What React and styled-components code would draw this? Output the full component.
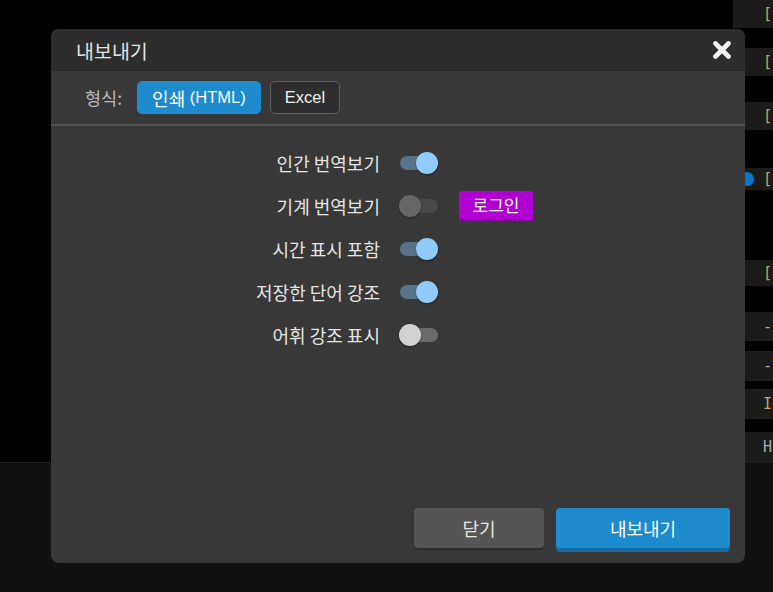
import React from "react";
import styled, { createGlobalStyle } from "styled-components";

const GlobalStyle = createGlobalStyle`
  html, body { margin: 0; padding: 0; background: #000; overflow: hidden; }
  body { font-family: "Liberation Sans", "Noto Sans CJK KR", sans-serif; }
  * { box-sizing: border-box; }
`;

const Page = styled.div`
  position: relative;
  width: 773px;
  height: 592px;
  display: flex;
  flex-direction: column;
  background: #000;
`;

const TopArea = styled.div`
  height: 463px;
  display: flex;
  justify-content: flex-end;
  border-bottom: 1px solid #1c1c1c;
`;

const SidePanel = styled.div`
  width: 40px;
  border-left: 1px solid #141a22;
  display: flex;
  flex-direction: column;
  overflow: hidden;
`;

const SideRow = styled.div`
  height: ${(p) => p.h}px;
  margin-top: ${(p) => p.mt}px;
  background: #1b1b1b;
  display: flex;
  align-items: center;
  padding-left: 29px;
  font-family: "DejaVu Sans Mono", monospace;
  font-size: 15px;
  white-space: nowrap;
  color: #c8a45c;
  position: relative;
  overflow: hidden;
`;

const Accent = styled.span`
  color: ${(p) => p.c};
`;

const Dot = styled.span`
  position: absolute;
  left: 6px;
  top: 50%;
  transform: translateY(-50%);
  width: 14px;
  height: 14px;
  border-radius: 50%;
  background: #0a74c9;
`;

const BottomArea = styled.div`
  flex: 1;
  background: #111;
`;

const Dialog = styled.div`
  position: absolute;
  left: 51px;
  top: 29px;
  width: 694px;
  height: 534px;
  background: #383838;
  border-radius: 8px;
  display: flex;
  flex-direction: column;
  overflow: hidden;
`;

const Header = styled.div`
  height: 42px;
  background: #2d2d2d;
  display: flex;
  align-items: center;
  justify-content: space-between;
  padding: 0 13px 0 25px;
`;

const Title = styled.div`
  color: #e2e2e2;
  font-size: 19.5px;
  font-family: "Noto Sans CJK KR", sans-serif;
`;

const CloseButton = styled.button`
  background: none;
  border: none;
  padding: 0;
  width: 20px;
  height: 20px;
  display: flex;
  align-items: center;
  justify-content: center;
  cursor: pointer;
`;

const Toolbar = styled.div`
  height: 55px;
  display: flex;
  align-items: center;
  gap: 9px;
  padding-left: 34px;
  border-bottom: 2px solid #535353;
`;

const FormatLabel = styled.span`
  color: #b9b9b9;
  font-size: 17.5px;
  font-family: "Noto Sans CJK KR", sans-serif;
  margin-right: 6px;
`;

const Hangul = styled.span`
  font-family: "Noto Sans CJK KR", sans-serif;
  font-size: 18px;
`;

const FormatButton = styled.button`
  height: 33px;
  padding: 0 14px;
  border-radius: 5px;
  font-family: "Liberation Sans", "Noto Sans CJK KR", sans-serif;
  font-size: 16.5px;
  color: ${(p) => (p.active ? "#fff" : "#eee")};
  background: ${(p) => (p.active ? "#1e8bcd" : "#2e2e2e")};
  border: 1px solid ${(p) => (p.active ? "#1e8bcd" : "#5f5f5f")};
  display: flex;
  align-items: center;
`;

const Body = styled.div`
  flex: 1;
  padding-top: 15px;
  display: grid;
  grid-template-columns: 329px 1fr;
  grid-auto-rows: 43px;
  column-gap: 20px;
  align-content: start;
`;

const Label = styled.div`
  color: #e4e4e4;
  font-size: 18px;
  font-family: "Noto Sans CJK KR", sans-serif;
  display: flex;
  align-items: center;
  justify-content: flex-end;
`;

const Controls = styled.div`
  display: flex;
  align-items: center;
  gap: 21px;
`;

const Track = styled.div`
  position: relative;
  width: 38px;
  height: 14px;
  border-radius: 7px;
  background: ${(p) => (p.on ? "#587288" : p.disabled ? "#484848" : "#6a6a6a")};
`;

const Thumb = styled.div`
  position: absolute;
  top: -4px;
  left: ${(p) => (p.on ? "16px" : "-1px")};
  width: 22px;
  height: 22px;
  border-radius: 50%;
  background: ${(p) => (p.on ? "#90cbf9" : p.disabled ? "#666" : "#d2d2d2")};
  box-shadow: 0 1px 2px rgba(0,0,0,0.35);
`;

const LoginButton = styled.button`
  height: 28px;
  width: 74px;
  padding: 0;
  background: #b000d2;
  border: none;
  border-radius: 2px;
  box-shadow: 0 3px 0 #86009e;
  color: #fff;
  font-size: 17px;
  font-family: "Noto Sans CJK KR", sans-serif;
  margin-top: -2px;
`;

const Footer = styled.div`
  display: flex;
  justify-content: flex-end;
  gap: 12px;
  padding: 0 15px 15px 0;
`;

const FooterButton = styled.button`
  width: ${(p) => p.w}px;
  height: 40px;
  border: none;
  border-radius: 4px;
  font-size: 18px;
  font-family: "Noto Sans CJK KR", sans-serif;
  color: ${(p) => (p.primary ? "#fff" : "#e4e4e4")};
  background: ${(p) => (p.primary ? "#1e8bcd" : "#555")};
  box-shadow: ${(p) => (p.primary ? "0 4px 0 #176aa0" : "0 2px 1px #2c2c2c")};
`;

function Toggle({ on, disabled }) {
  return (
    <Track on={on ? 1 : 0} disabled={disabled}>
      <Thumb on={on ? 1 : 0} disabled={disabled} />
    </Track>
  );
}

const sideRows = [
  { h: 28, mt: 0, t: "[", a: "c", c: "#ce9178" },
  { h: 28, mt: 20, t: "[", a: "c", c: "#ce9178" },
  { h: 28, mt: 26, t: "[", a: "c", c: "#ce9178" },
  { h: 22, mt: 38, t: "[", a: "I", c: "#d4d4d4", dot: true },
  { h: 26, mt: 70, t: "[", a: "b", c: "#d4d4d4" },
  { h: 29, mt: 26, t: "-", a: "l", c: "#4fa1e0", grey: true },
  { h: 30, mt: 10, t: "-", a: "v", c: "#4fa1e0", grey: true },
  { h: 30, mt: 8, t: "I", a: "<", c: "#4fa1e0" },
  { h: 30, mt: 13, t: "H", a: "", c: "#ccc", grey: true },
];

const options = [
  { label: "인간 번역보기", on: true },
  { label: "기계 번역보기", on: false, disabled: true, login: true },
  { label: "시간 표시 포함", on: true },
  { label: "저장한 단어 강조", on: true },
  { label: "어휘 강조 표시", on: false },
];

export default function App() {
  return (
    <>
      <GlobalStyle />
      <Page>
        <TopArea>
          <SidePanel>
            {sideRows.map((r, i) => (
              <SideRow key={i} h={r.h} mt={r.mt}>
                {r.dot && <Dot />}
                <Accent c={r.grey ? "#aaa" : "#c8a45c"}>{r.t}</Accent>
                <Accent c={r.c}>{r.a}</Accent>
              </SideRow>
            ))}
          </SidePanel>
        </TopArea>
        <BottomArea />
        <Dialog>
          <Header>
            <Title>내보내기</Title>
            <CloseButton aria-label="close">
              <svg width="20" height="18" viewBox="0 0 20 18">
                <path d="M3.5 2.5 L16.5 15.5 M16.5 2.5 L3.5 15.5" stroke="#f2f2f2" strokeWidth="4.6" strokeLinecap="round" />
              </svg>
            </CloseButton>
          </Header>
          <Toolbar>
            <FormatLabel>형식:</FormatLabel>
            <FormatButton active>
              <Hangul>인쇄</Hangul>&nbsp;(HTML)
            </FormatButton>
            <FormatButton>Excel</FormatButton>
          </Toolbar>
          <Body>
            {options.map((o) => (
              <React.Fragment key={o.label}>
                <Label>{o.label}</Label>
                <Controls>
                  <Toggle on={o.on} disabled={o.disabled} />
                  {o.login && <LoginButton>로그인</LoginButton>}
                </Controls>
              </React.Fragment>
            ))}
          </Body>
          <Footer>
            <FooterButton w={130}>닫기</FooterButton>
            <FooterButton w={174} primary>
              내보내기
            </FooterButton>
          </Footer>
        </Dialog>
      </Page>
    </>
  );
}
